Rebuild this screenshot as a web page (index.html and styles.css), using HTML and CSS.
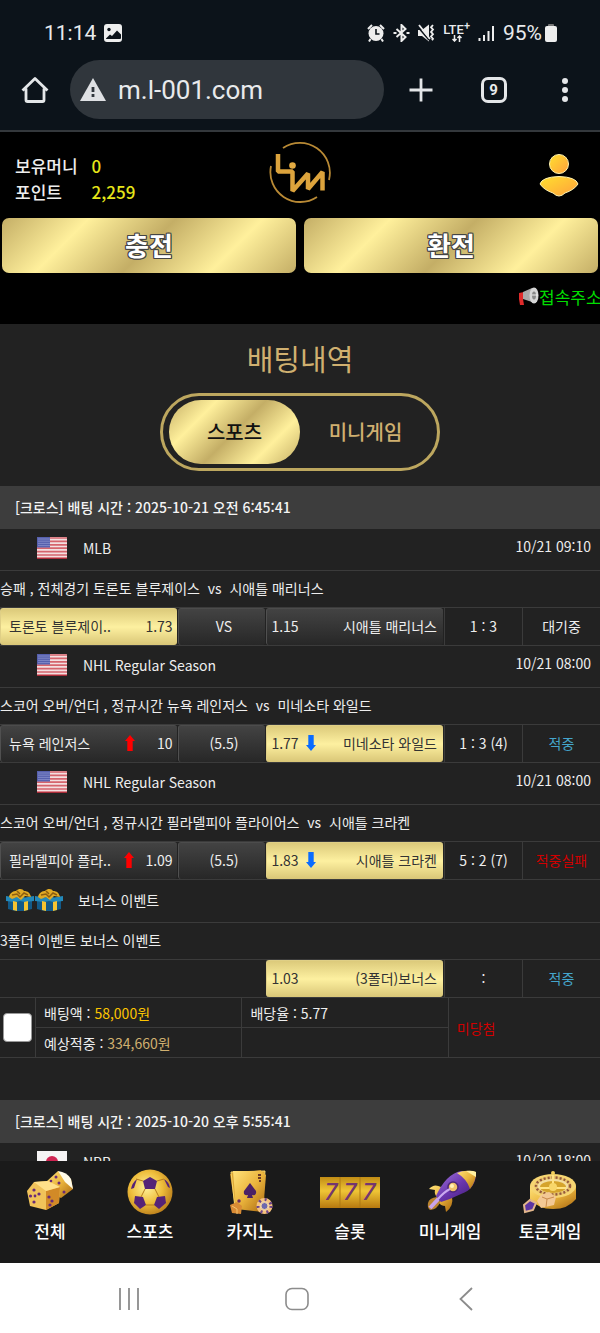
FILE: index.html
```
<!DOCTYPE html>
<html lang="ko">
<head>
<meta charset="utf-8">
<meta name="viewport" content="width=device-width, initial-scale=1">
<title>배팅내역</title>
<link rel="stylesheet" href="styles.css">
</head>
<body>
<svg class="defs" aria-hidden="true">
  <defs>
    <linearGradient id="gold" x1="0" y1="0" x2="1" y2="1"><stop offset="0" stop-color="#ffe27a"/><stop offset=".5" stop-color="#eab43c"/><stop offset="1" stop-color="#a8660f"/></linearGradient>
    <linearGradient id="slot" x1="0" y1="0" x2="0" y2="1"><stop offset="0" stop-color="#c08c15"/><stop offset=".45" stop-color="#f0c536"/><stop offset="1" stop-color="#b5780f"/></linearGradient>
    <radialGradient id="ballgold" cx=".42" cy=".4" r=".65"><stop offset="0" stop-color="#fff19a"/><stop offset=".55" stop-color="#eebd3b"/><stop offset="1" stop-color="#b87b1a"/></radialGradient>
    <linearGradient id="purple" x1="0" y1="0" x2="1" y2="1"><stop offset="0" stop-color="#a57ae0"/><stop offset=".5" stop-color="#6a36ae"/><stop offset="1" stop-color="#3d1a70"/></linearGradient>
    <linearGradient id="user" x1="0" y1="0" x2="1" y2="1"><stop offset="0" stop-color="#ffe02f"/><stop offset="1" stop-color="#ff9f3c"/></linearGradient>
  </defs>
  <symbol id="us" viewBox="0 0 32 24">
    <rect x="1" y="1" width="30" height="22" rx="1" fill="#f3dfe0"/>
    <path d="M1 2h30M1 5.4h30M1 8.8h30M1 12.2h30M1 15.6h30M1 19h30M1 22.2h30" stroke="#d5646c" stroke-width="1.7"/>
    <rect x="1" y="1" width="13" height="10.5" fill="#5660ad"/>
    <path d="M2.5 3h11M2.5 5.2h11M2.5 7.4h11M2.5 9.6h11" stroke="#a9afe0" stroke-width="1" stroke-dasharray="1 1"/>
    <path d="M1 22.5h30" stroke="#a92b38"/>
  </symbol>
  <symbol id="gift" viewBox="0 0 28 24">
    <path d="M2 11l12 2 12-2v10l-8 2H9l-7-2z" fill="#135a88"/>
    <path d="M0 8l9 1.5L14 8l5 1.5L28 8v5l-9 1-5-1-5 1-9-1z" fill="#2389ba"/>
    <path d="M7 13l4 1v9l-4-1zM18 14l4-1v9l-4 1z" fill="#f6c530"/>
    <path d="M3 9C4 4 8 3 10 3c3-3 7-2 8 0 4 0 6 2 7 6l-6-1-4 4-4-3-5 2z" fill="#e0aa25"/>
    <path d="M6 7l5-1 3 3 4-4 4 2M11 3l3 3" fill="none" stroke="#8d5d10" stroke-width="1.5"/>
  </symbol>
  <symbol id="up" viewBox="0 0 10 16"><path d="M5 0l5 6H7.700v10H2.300V6H0z" fill="#f00"/></symbol>
  <symbol id="down" viewBox="0 0 10 16"><path d="M5 16L0 10h2.300V0h5.400v10H10z" fill="#0a6cff"/></symbol>
</svg>

<header class="browser">
  <div class="status">
    <span>11:14</span>
    <svg width="18" height="18" viewBox="0 0 18 18"><rect width="18" height="18" rx="3" fill="#eee"/><circle cx="5" cy="5.500" r="1.700" fill="#0c131a"/><path d="M2 14.500l4-4 2 1.500 5-5.500 4 4v3.500q0 1-1 1H2z" fill="#0c131a"/></svg>
    <span class="spacer"></span>
    <svg width="18" height="18" viewBox="0 0 18 18"><circle cx="9" cy="9.500" r="7.500" fill="#eee"/><path d="M1 5l4-4M17 5l-4-4M3.500 15L2 17.500M14.500 15l1.500 2.500" stroke="#eee" stroke-width="2"/><path d="M9 5v5h3.500" fill="none" stroke="#0c131a" stroke-width="1.600"/></svg>
    <svg width="17" height="18" viewBox="0 0 17 18"><path d="M3.500 5l9 8L8.500 17V1l4 4-9 8" fill="none" stroke="#eee" stroke-width="2"/><path d="M.5 9h3M13.500 9h3" stroke="#eee" stroke-width="2.200"/></svg>
    <svg width="17" height="18" viewBox="0 0 17 18"><path d="M0 6h4l7-5.500v17L4 12H0z" fill="#eee"/><path d="M0 3l11 13" stroke="#0c131a" stroke-width="1.500"/><path d="M1 1l11 14" stroke="#eee" stroke-width="1.800"/><path d="M15 1l-2 2.300 2 2.300-2 2.300 2 2.300-2 2.300 2 2.300-1 1.500" fill="none" stroke="#eee" stroke-width="1.800"/></svg>
    <span class="lte"><span>LTE<sup>+</sup></span><svg width="10" height="7" viewBox="0 0 10 7"><path d="M2.500 0v6M.5 4l2 2 2-2M7.500 7V1M5.500 3l2-2 2 2" fill="none" stroke="#eee" stroke-width="1.500"/></svg></span>
    <svg width="17" height="18" viewBox="0 0 17 18"><path d="M1.500 14v3M6 11v6M10.500 7v10M15 2v15" stroke="#eee" stroke-width="2"/></svg>
    <span class="battery">95%<svg width="12" height="18" viewBox="0 0 12 18"><rect x="3" width="6" height="3" rx="1" fill="#777"/><rect y="2" width="12" height="16" rx="2" fill="#eee"/></svg></span>
  </div>
  <div class="toolbar">
    <button class="tool home" aria-label="홈"><svg width="28" height="28" viewBox="0 0 28 28"><path d="M1.500 14.500L14 2.500l12.500 12M5 12.500v11.500q0 1.500 1.500 1.500h15q1.500 0 1.500-1.500V12.500" fill="none" stroke="#e4e6e8" stroke-width="2.800" stroke-linejoin="round"/></svg></button>
    <a class="address" href="#"><svg width="26" height="23" viewBox="0 0 26 23"><path d="M13 0l13 23H0z" fill="#dfe1e4"/><path d="M13 9v5M13 16v3" stroke="#30363c" stroke-width="2.800"/></svg>m.l-001.com</a>
    <button class="tool" aria-label="새 탭"><svg width="24" height="24" viewBox="0 0 24 24"><path d="M12 .5v23M.5 12h23" stroke="#e4e6e8" stroke-width="2.800"/></svg></button>
    <button class="tool" aria-label="탭 9개"><span class="tabs">9</span></button>
    <button class="tool last" aria-label="메뉴"><svg width="8" height="24" viewBox="0 0 8 24"><circle cx="4" cy="3" r="3" fill="#e4e6e8"/><circle cx="4" cy="12" r="3" fill="#e4e6e8"/><circle cx="4" cy="21" r="3" fill="#e4e6e8"/></svg></button>
  </div>
</header>

<section class="account">
  <div class="account-top">
    <dl class="money"><dt>보유머니</dt><dd>0</dd><dt>포인트</dt><dd>2,259</dd></dl>
    <a href="#" aria-label="LIM"><svg width="64" height="64" viewBox="0 0 64 64" fill="none" stroke="#dca33c"><path d="M15 7A30 30 0 0 1 61 39M49 56A30 30 0 0 1 3 25" stroke="#b98a35" stroke-width="1.800"/><path d="M10 13v17.500h14.500V50L40 32.500V48L54.500 31v18.500" stroke-width="4.500" stroke-linejoin="bevel"/><circle cx="24.500" cy="24.500" r="3.300" fill="#e3ab42" stroke="none"/></svg></a>
    <a href="#" class="profile" aria-label="내 정보"><svg width="40" height="44" viewBox="0 0 40 44"><circle cx="20" cy="11" r="9.500" fill="url(#user)" stroke="#fff3b0"/><path d="M1 31Q3 24 20 23.500 37 24 39 31 35 37 26 40q-3 3-6 3t-6-3Q5 37 1 31z" fill="url(#user)" stroke="#fff3b0"/></svg></a>
  </div>
  <div class="cash"><button>충전</button><button>환전</button></div>
  <p class="notice"><svg width="21" height="19" viewBox="0 0 21 19"><path d="M1 6l5-1v6l-1 1 1 6H2l-1-6z" fill="#e02b2b"/><path d="M5 5l9-4 3 15-12-4z" fill="#aaa"/><ellipse cx="16" cy="8.500" rx="4.500" ry="8" fill="#d6d6d6"/><ellipse cx="16" cy="8.500" rx="2" ry="4" fill="#888"/><path d="M14 8h6" stroke="#eee"/></svg>접속주소</p>
</section>

<main>
  <h1>배팅내역</h1>
  <div class="switch"><button class="active">스포츠</button><button>미니게임</button></div>

  <article>
    <h2>[크로스] 배팅 시간 : 2025-10-21 오전 6:45:41</h2>
    <table class="bets">
      <colgroup><col class="team"><col class="line"><col class="team"><col class="score"><col class="score"></colgroup>
      <tbody>
      <tr class="league"><td colspan="3"><div><svg width="32" height="24"><use href="#us"/></svg>MLB</div></td><td colspan="2" class="date">10/21 09:10</td></tr>
      <tr class="match"><td colspan="5">승패 , 전체경기 토론토 블루제이스 &nbsp;vs&nbsp; 시애틀 매리너스</td></tr>
      <tr class="odds"><td><div class="pick on"><span>토론토 블루제이..</span><b>1.73</b></div></td><td><div class="pick mid">VS</div></td><td><div class="pick away"><b>1.15</b><span>시애틀 매리너스</span></div></td><td class="cell">1 : 3</td><td class="cell">대기중</td></tr>

      <tr class="league"><td colspan="3"><div><svg width="32" height="24"><use href="#us"/></svg>NHL Regular Season</div></td><td colspan="2" class="date">10/21 08:00</td></tr>
      <tr class="match"><td colspan="5">스코어 오버/언더 , 정규시간 뉴욕 레인저스 &nbsp;vs&nbsp; 미네소타 와일드</td></tr>
      <tr class="odds"><td><div class="pick"><span>뉴욕 레인저스</span><svg width="12" height="16"><use href="#up"/></svg><b>10</b></div></td><td><div class="pick mid">(5.5)</div></td><td><div class="pick away on"><b>1.77</b><svg width="12" height="16"><use href="#down"/></svg><span>미네소타 와일드</span></div></td><td class="cell">1 : 3 (4)</td><td class="cell hit">적중</td></tr>

      <tr class="league"><td colspan="3"><div><svg width="32" height="24"><use href="#us"/></svg>NHL Regular Season</div></td><td colspan="2" class="date">10/21 08:00</td></tr>
      <tr class="match"><td colspan="5">스코어 오버/언더 , 정규시간 필라델피아 플라이어스 &nbsp;vs&nbsp; 시애틀 크라켄</td></tr>
      <tr class="odds"><td><div class="pick"><span>필라델피아 플라..</span><svg width="12" height="16"><use href="#up"/></svg><b>1.09</b></div></td><td><div class="pick mid">(5.5)</div></td><td><div class="pick away on"><b>1.83</b><svg width="12" height="16"><use href="#down"/></svg><span>시애틀 크라켄</span></div></td><td class="cell">5 : 2 (7)</td><td class="cell miss">적중실패</td></tr>

      <tr class="league bonus"><td colspan="5"><div><span><svg width="28" height="24"><use href="#gift"/></svg><svg width="28" height="24"><use href="#gift"/></svg></span>보너스 이벤트</div></td></tr>
      <tr class="match"><td colspan="5">3폴더 이벤트 보너스 이벤트</td></tr>
      <tr class="odds"><td colspan="2"></td><td><div class="pick away on"><b>1.03</b><span>(3폴더)보너스</span></div></td><td class="cell">:</td><td class="cell hit">적중</td></tr>
      </tbody>
    </table>
    <table class="summary">
      <colgroup><col class="check"><col class="amount"><col class="amount"><col></colgroup>
      <tbody>
      <tr><td rowspan="2" class="tick"><input type="checkbox" aria-label="배팅 선택"></td><td>배팅액 : <span class="stake">58,000원</span></td><td>배당율 : 5.77</td><td rowspan="2" class="miss">미당첨</td></tr>
      <tr><td>예상적중 : <span class="win">334,660원</span></td><td></td></tr>
      </tbody>
    </table>
  </article>

  <article>
    <h2>[크로스] 배팅 시간 : 2025-10-20 오후 5:55:41</h2>
    <table class="bets">
      <tbody><tr class="league"><td><div><svg width="32" height="24" viewBox="0 0 32 24"><rect x="1" y="1" width="30" height="22" fill="#f5f3f4"/><circle cx="16" cy="12" r="6" fill="#cf2452"/></svg>NPB</div></td><td class="date">10/20 18:00</td></tr></tbody>
    </table>
  </article>
</main>

<nav class="tabs-bar">
  <a href="#"><svg width="48" height="46" viewBox="0 0 48 46"><path d="M20 13L32 2l13 8 2 10-12 9-14-6z" fill="url(#gold)"/><path d="M32 2q9 1 13 8l2 10-8-7z" fill="#fffbe8"/><path d="M1 22L8 13l14-1 12 6-1 16-13 7-16-4z" fill="#f1c35a"/><path d="M20 22l14-4-1 16-13 7z" fill="#d28a27"/><path d="M8 13l14-1 12 6-14 4z" fill="#ffe08a"/><g fill="#6a2b78"><circle cx="8" cy="21" r="1.600"/><circle cx="4.500" cy="27" r="1.600"/><circle cx="13" cy="25" r="1.600"/><circle cx="8" cy="33" r="1.600"/><circle cx="9" cy="27" r="1.400"/><circle cx="23" cy="28" r="1.600"/><circle cx="26" cy="32" r="1.600"/><circle cx="24" cy="36" r="1.600"/><circle cx="30" cy="8" r="1.500"/><circle cx="33" cy="14" r="1.500"/><circle cx="25" cy="12" r="1.300"/><circle cx="38" cy="23" r="1.500"/></g></svg>전체</a>
  <a href="#"><svg width="46" height="46" viewBox="0 0 46 46"><circle cx="23" cy="23" r="22.500" fill="url(#ballgold)"/><g fill="#552377"><path d="M23 8l7 4-2 8H18l-2-8z"/><path d="M8 27l8 1 3 8-6 4-6-6z"/><path d="M38 27l-8 1-3 8 5 4 7-6z"/><path d="M10 10l-3 9-3 1q1-6 6-10z"/><path d="M37 10l4 8 2 1q-1-6-6-9z"/></g><path d="M18 20l-4 8M28 20l4 8M19 36h8M16 12L9 10M30 12l7-2" stroke="#b57b1d"/></svg>스포츠</a>
  <a href="#"><svg width="46" height="46" viewBox="0 0 46 46"><path d="M3 5L34 1l4 34-30 4z" fill="#b97b19"/><path d="M4 3l34-1-3 37H8z" fill="#dda735" stroke="#f8d76c"/><path d="M6 2h28l5 4-3 37-27-3z" fill="url(#gold)"/><path d="M23 14q-3 4-6 8-1 5 4 4l-1 3h6l-1-3q5 1 4-4-3-4-6-8z" fill="#4b2265"/><path d="M31 6h3M31 9h3M32 12h2" stroke="#6c3a25" stroke-width="2"/><path d="M3 36l7-3 5 4-1 8-9-1z" fill="#d98b35"/><path d="M5 37l5 3v5" fill="none" stroke="#f7c36c"/><circle cx="12" cy="32" r="1.700" fill="#6a2b61"/><circle cx="37.500" cy="37" r="6.500" fill="#f3d3a4" stroke="#f6c27c" stroke-width="3"/><circle cx="37.500" cy="37" r="6.500" fill="none" stroke="#6b448c" stroke-width="3" stroke-dasharray="2 4"/><circle cx="37.500" cy="37" r="3.500" fill="#6d68af" stroke="#f2d2a4"/></svg>카지노</a>
  <a href="#"><svg width="60" height="46" viewBox="0 0 60 46"><rect y="8" width="60" height="31" fill="url(#slot)"/><path d="M20 8v31M40 8v31" stroke="#ad7914"/><g class="sevens"><text x="11" y="31">7</text><text x="30" y="31">7</text><text x="49" y="31">7</text></g></svg>슬롯</a>
  <a href="#"><svg width="54" height="46" viewBox="0 0 54 46"><path d="M18 18q-7-4-12 2l6 1q-1 4 2 7zM29 28q2 9-6 15l-1-6q-4 0-7-4z" fill="url(#gold)"/><path d="M5 34q1-5 9-6l3 5q-2 7-10 8-3-2-2-7z" fill="#b9832d"/><path d="M7 39l12-13" stroke="#c9a5ea" stroke-width="4"/><path d="M13 27Q23 5 38 2l15 2q0 16-15 21-10 5-20 8z" fill="url(#purple)"/><path d="M34 4q9-4 19-1 0 10-6 17-3-10-13-16z" fill="url(#gold)"/><path d="M43 2q6-1 10 1v5z" fill="#fff0a0"/><circle cx="30" cy="18" r="5" fill="#f0c26c" stroke="#4c2678" stroke-width="1.500"/><circle cx="29" cy="17" r="2" fill="#fff0ba"/><path d="M15 30q6-7 12-10" stroke="#caaaf0" stroke-width="2" fill="none"/></svg>미니게임</a>
  <a href="#"><svg width="56" height="46" viewBox="0 0 56 46"><path d="M8 17v13q8 10 23 10t23-10V17z" fill="url(#gold)"/><ellipse cx="31" cy="17" rx="23" ry="12" fill="#f6d572"/><ellipse cx="31" cy="17" rx="17" ry="8.500" fill="#f3dda0" stroke="#e8c46c" stroke-width="3"/><ellipse cx="31" cy="17" rx="17" ry="8.500" fill="none" stroke="#94583c" stroke-width="2.500" stroke-dasharray="2 2"/><ellipse cx="31" cy="18" rx="13" ry="6" fill="#d5a42c"/><path d="M18 19h26M31 3v15" stroke="#ffe483" stroke-width="2"/><circle cx="31" cy="4" r="2" fill="#f3cf5c"/><circle cx="31" cy="18" r="4" fill="#f8d76a"/><path d="M19 26l8-3 7 5-2 8-13 3-4-7z" fill="#f3c894"/><path d="M20 28l5 2 7-2M25 30l-1 8" stroke="#c98b4c" fill="none"/><path d="M2 36l6-5 6 3-3 7-8 2z" fill="#5c35a2" stroke="#e2b68c" stroke-width="2"/></svg>토큰게임</a>
</nav>

<footer class="system">
  <button aria-label="최근 앱"><svg width="24" height="24" viewBox="0 0 24 24"><path d="M3 1v22M12 1v22M21 1v22" stroke="#8c8c8c" stroke-width="1.800"/></svg></button>
  <button aria-label="홈"><svg width="24" height="24" viewBox="0 0 24 24"><rect x="1" y="1.500" width="22" height="21" rx="6" fill="none" stroke="#8c8c8c" stroke-width="1.600"/></svg></button>
  <button aria-label="뒤로"><svg width="24" height="24" viewBox="0 0 24 24"><path d="M18 1L6.500 12 18 23" fill="none" stroke="#8c8c8c" stroke-width="1.800"/></svg></button>
</footer>
</body>
</html>
```
FILE: styles.css
```
* { box-sizing: border-box; }

body {
  margin: 0;
  height: 100vh;
  display: flex;
  flex-direction: column;
  background: #222;
  color: #eee;
  font: 14px/20px "Noto Sans CJK KR", sans-serif;
}

button { border: 0; padding: 0; background: none; color: inherit; font: inherit; }
a { color: inherit; text-decoration: none; }
svg { display: block; flex: none; }
h1, h2, p, dl, dd { margin: 0; }
.defs { position: absolute; width: 0; height: 0; }

/* Browser chrome */
.browser {
  flex: none;
  background: #0c131a;
  border-bottom: 2px solid #34383c;
  color: #e8eaec;
  font-family: Roboto, sans-serif;
}
.status {
  display: flex;
  align-items: center;
  gap: 8px;
  height: 60px;
  padding: 6px 43px 0 44px;
  font-size: 21px;
}
.spacer { flex: 1; }
.lte { display: flex; flex-direction: column; align-items: center; font-size: 13px; font-weight: 500; line-height: 11px; }
.lte sup { font-size: 11px; line-height: 0; }
.battery { display: flex; align-items: center; gap: 3px; }
.toolbar { display: flex; align-items: center; padding-bottom: 11px; }
.tool { display: flex; align-items: center; justify-content: center; width: 73px; height: 59px; }
.home { width: 70px; }
.last { width: 70px; }
.address {
  flex: 1;
  display: flex;
  align-items: center;
  gap: 12px;
  height: 59px;
  padding-left: 10px;
  border-radius: 30px;
  background: #30363c;
  font-size: 26px;
}
.tabs {
  width: 26px;
  height: 26px;
  border: 3px solid #e4e6e8;
  border-radius: 7px;
  font-size: 15px;
  font-weight: 700;
}

/* Account header */
.account { flex: none; background: #000; overflow: hidden; }
.account-top {
  display: grid;
  grid-template-columns: 1fr auto 1fr;
  align-items: center;
  height: 86px;
  padding: 0 15px 4px;
}
.money {
  display: grid;
  grid-template-columns: auto 1fr;
  column-gap: 14px;
  padding-top: 12px;
  font-size: 17px;
  font-weight: 500;
  line-height: 26px;
}
.money dd { color: #e6e619; }
.profile { justify-self: end; padding: 4px 6px 0 0; }
.cash { display: grid; grid-template-columns: 1fr 1fr; gap: 8px; padding: 0 2px; }
.cash button, .switch .active {
  background: linear-gradient(135deg, #c4ae66, #fff09c 25%, #c4ae66 50%, #fff09c 75%, #c4ae66);
}
.cash button {
  height: 55px;
  padding-bottom: 2px;
  border-radius: 7px;
  color: #fff;
  font-size: 26px;
  font-weight: 700;
  text-shadow: 1px 1px #444, -1px 1px #444, 1px -1px #444, -1px -1px #444, 0 1px #444, 1px 0 #444, -1px 0 #444, 0 -1px #444;
}
.notice {
  display: flex;
  align-items: center;
  height: 51px;
  padding: 0 0 4px 86%;
  margin-left: 2px;
  color: #0d0;
  font-size: 17px;
  white-space: nowrap;
}

/* History */
main { flex: 1; min-height: 0; overflow: auto; scrollbar-width: none; }
h1 {
  padding-top: 14px;
  color: #d0b070;
  font-size: 29px;
  font-weight: 400;
  line-height: 40px;
  text-align: center;
}
.switch {
  display: grid;
  grid-template-columns: 1fr 1fr;
  width: 280px;
  height: 78px;
  margin: 15px auto;
  padding: 4px 6px;
  border: 3px solid #bda75f;
  border-radius: 39px;
  color: #d0b070;
  font-size: 20px;
  font-weight: 500;
}
.switch button { border-radius: 32px; }
.switch .active { color: #111; }
article { margin-bottom: 42px; }
h2 {
  padding: 0 15px;
  background: #3d3d3d;
  color: #f4f4f4;
  font-size: 14px;
  font-weight: 500;
  line-height: 43px;
}
table { width: 100%; border-spacing: 0; table-layout: fixed; }
td { padding: 0; border-bottom: 1px solid #3b3b3b; }
.team { width: 29.6%; }
.line { width: 14.8%; }
.score { width: 13%; }
.league td { height: 42px; padding-bottom: 3px; }
.league div { display: flex; align-items: center; gap: 15px; padding-left: 36px; }
.league .date { padding: 0 9px 7px 0; text-align: right; }
.bonus td { height: 43px; }
.bonus div { padding-left: 6px; }
.bonus span { display: flex; gap: 1px; }
.match td { height: 37px; padding-bottom: 2px; }
.odds td { height: 38px; }
.odds .cell { padding-bottom: 2px; border-left: 1px solid #3b3b3b; text-align: center; }
.pick {
  display: flex;
  align-items: center;
  gap: 10px;
  height: 37px;
  margin-right: 1px;
  padding: 0 4px 2px 8px;
  border-left: 1px solid #505050;
  border-top: 1px solid #4c4c4c;
  border-radius: 3px;
  background: linear-gradient(#434343, #272727);
  white-space: nowrap;
}
.pick b { font-weight: 400; min-width: 27px; text-align: right; }
.pick span { flex: 1; min-width: 0; }
.mid { justify-content: center; }
.away { gap: 6px; padding: 0 6px 2px 4px; }
.away span { text-align: right; }
.pick.on {
  border-color: #dfcf86;
  background: linear-gradient(#dcca7b, #fdf0a0 50%, #d9c677);
  color: #333;
}
.hit { color: #45a5cc; }
.miss { color: #d00000; }
.check { width: 6%; }
.amount { width: 34.4%; }
.summary td { height: 30px; padding-left: 8px; border-right: 1px solid #3b3b3b; }
.summary td:last-child.miss { border-right: 0; }
.summary .tick { padding-left: 3px; }
.tick input {
  display: block;
  appearance: none;
  width: 29px;
  height: 29px;
  margin: 0;
  border: 1px solid #999;
  border-radius: 4px;
  background: #fff;
}
.stake { color: #fdc500; }
.win { color: #d0b070; }

/* Bottom bars */
.tabs-bar {
  flex: none;
  display: grid;
  grid-template-columns: repeat(6, 1fr);
  height: 102px;
  padding-top: 8px;
  background: #1a1a1a;
  color: #fff;
  font-size: 17px;
  font-weight: 500;
}
.tabs-bar a { display: flex; flex-direction: column; align-items: center; gap: 6px; }
.sevens { fill: #74366f; font: italic 500 23px Inter, sans-serif; text-anchor: middle; }
.system {
  flex: none;
  display: grid;
  grid-template-columns: repeat(3, 1fr);
  height: 70px;
  padding: 2px 50px 0 45px;
  background: #fff;
}
.system button { display: flex; align-items: center; justify-content: center; }
```
